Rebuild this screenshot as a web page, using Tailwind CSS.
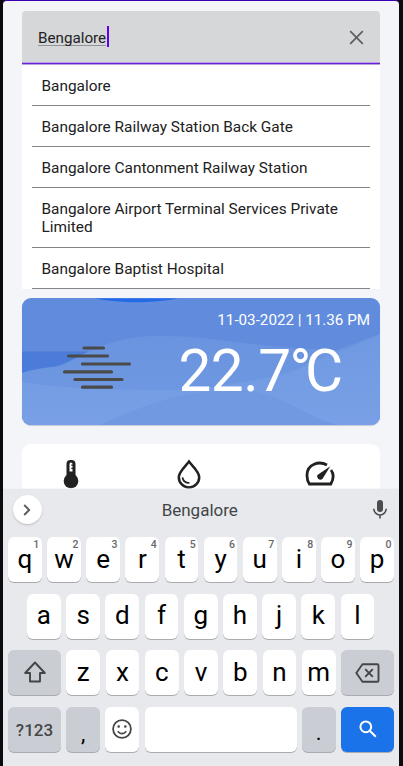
<!DOCTYPE html>
<html lang="en">
<head>
<meta charset="utf-8">
<title>Weather search</title>
<script src="https://cdn.jsdelivr.net/npm/@tailwindcss/browser@4"></script>
</head>
<body class="w-[403px] h-[766px] overflow-hidden bg-[#0b0a0c] font-['Roboto',sans-serif]">
<div class="ml-[3px] w-[396px] h-[766px] flex flex-col overflow-hidden rounded-t-[4px] bg-[#f4f5f8] border-t border-[#3700b3]">

  <main class="h-[488px] shrink-0 overflow-hidden pt-[10px] pl-[19px] pr-[19px]">
    <div class="h-[51px] flex items-center justify-between rounded-t-[4px] bg-[#d6d7d9] pl-[16px] pr-[16px]">
      <div class="flex items-center">
        <span class="text-[15.2px] leading-[18px] text-[#222] border-b border-[#929395] h-[17px] mt-[1px] w-[68px] whitespace-nowrap">Bengalore</span>
        <span class="w-[2px] h-[21px] ml-[1px] bg-[#6200ee]"></span>
      </div>
      <svg class="w-[15px] h-[15px] mt-[2px]" viewBox="0 0 15 15" fill="none" stroke="#5f6062" stroke-width="1.8"><path d="M1.200 1.200 13.800 13.800M13.800 1.200 1.200 13.800"/></svg>
    </div>
    <div class="h-[3px] bg-[#6a1fd8] border-y border-[#b6a2e2]"></div>
    <div class="h-[224px] bg-white px-[10px] text-[15.4px] leading-[18px] text-[#212121] [&>div]:border-b [&>div]:border-[#858585] [&>div]:pl-[9.5px] [&>div]:pt-px [&>div]:flex [&>div]:items-center">
      <div class="h-[41px]">Bangalore</div>
      <div class="h-[41px]">Bangalore Railway Station Back Gate</div>
      <div class="h-[41px]">Bangalore Cantonment Railway Station</div>
      <div class="h-[60px]">Bangalore Airport Terminal Services Private Limited</div>
      <div class="h-[41px]">Bangalore Baptist Hospital</div>
    </div>

    <section class="relative mt-[9px] h-[127px] overflow-hidden rounded-[9px] bg-[#618cdd] shadow-[0_1px_1px_#c5cad4]">
      <svg class="absolute inset-0 w-[358px] h-[127px]" viewBox="0 0 358 127">
        <defs>
          <linearGradient id="hill" x1="0" y1="0" x2="0" y2="1"><stop offset="0" stop-color="#6a94df"/><stop offset="1" stop-color="#7199e2"/></linearGradient>
          <linearGradient id="front" x1="0" y1="0" x2="0" y2="1"><stop offset="0" stop-color="#6f99e2"/><stop offset="1" stop-color="#79a0e6"/></linearGradient>
        </defs>
        <path d="M73 0.500H156Q114 8 73 0.500Z" fill="#2469e8"/>
        <path d="M0 53.500H80L40 75H0Z" fill="#4b7cd9"/>
        <path d="M0 75C18 69 28 70 36 68C56 62 82 38 136 38C190 37 225 50 315 52L358 36V127H0Z" fill="url(#hill)"/>
        <path d="M0 84C45 91 85 92 150 92C190 92 215 84 245 80C280 74 298 58 325 51L358 36V127H0Z" fill="url(#front)"/>
        <path d="M78 127C120 108 160 92 215 92C258 92 280 118 316 127Z" fill="#7099e1"/>
        <g stroke="#4a4a4b" stroke-width="3.2" stroke-linecap="round">
          <path d="M62 50H81.500M46.500 58H85.500M60.500 66H107.500M42.500 73.800H89.500M53 81.500H100M60.500 89.200H89.500"/>
        </g>
      </svg>
      <div class="relative text-right text-white">
        <div class="pt-[13px] pr-[10px] text-[15.2px] leading-[19px]">11-03-2022 | 11.36 PM</div>
        <div class="pr-[37px] mt-[8px] text-[58.500px] leading-[66px] whitespace-nowrap"><span class="tracking-[-0.5px]">22.</span><span class="tracking-[-1.500px]">7</span><span class="tracking-[-6.500px]">°</span><span>C</span></div>
      </div>
    </section>

    <section class="mt-[19px] h-[60px] rounded-t-[9px] bg-white grid grid-cols-[97px_140px_122px] justify-items-center">
      <svg class="w-[16px] h-[30px] mt-[15px]" viewBox="0 0 16 30"><rect x="3.500" y="1" width="9" height="22" rx="4" fill="#212121"/><circle cx="8" cy="22" r="7.300" fill="#212121"/><path d="M6.500 5a1.500 1.500 0 0 1 3 0v7.500H6.500Z" fill="#fff"/><path d="M8.300 6.200H10.200M8.300 9.400H10.200" stroke="#212121" stroke-width="1.200"/></svg>
      <svg class="w-[24px] h-[30px] mt-[15px]" viewBox="0 0 24 30" fill="none" stroke="#212121"><path d="M12 2.600C9 6.700 1.800 12.500 1.800 18.200a10.200 10.200 0 0 0 20.400 0C22.200 12.500 15 6.700 12 2.600Z" stroke-width="2.500"/><path d="M5.500 18.300c.3 3.300 3 5.600 7 5.700" stroke-width="1.700"/></svg>
      <svg class="w-[30px] h-[26px] mt-[17px]" viewBox="0 0 30 26" fill="none" stroke="#212121" stroke-width="2.800"><path d="M22 4C14 -0.500 2.200 3 2 14Q1.900 19.200 4.400 23H25.800C28.600 18 28.700 12.500 26 9"/><path d="m25.300 5.200-7.900 12.800a3.300 3.300 0 0 1-5-4Z" fill="#212121" stroke="none"/></svg>
    </section>
  </main>

  <section class="flex-1 bg-[#e8e9ed] px-[5px] shadow-[0_-1px_1px_#ececef66] z-10">
    <div class="h-[48px] grid grid-cols-[1fr_auto_1fr] items-center pl-[4.500px] pr-[7px] pb-[7px]">
      <div class="w-[29px] h-[29px] rounded-full bg-white shadow-[0_1px_2px_#bbb] flex items-center justify-center">
        <svg class="w-[8px] h-[12px]" viewBox="0 0 8 12" fill="none" stroke="#5a5b5d" stroke-width="1.900"><path d="m1.200 1 5 5-5 5"/></svg>
      </div>
      <div class="text-[17px] text-[#444547] pt-[3px]">Bengalore</div>
      <svg class="w-[14px] h-[19px] justify-self-end" viewBox="0 0 14 19"><rect x="4" y="0" width="6" height="12" rx="3" fill="#4b4c4e"/><path d="M.8 8.800a6.200 6.200 0 0 0 12.400 0M7 15v3.500" fill="none" stroke="#4b4c4e" stroke-width="1.600"/></svg>
    </div>

    <div class="flex flex-col gap-[11.700px] text-black text-[26px] leading-none [&_b]:absolute [&_b]:right-[2.500px] [&_b]:top-[2px] [&_b]:text-[10.500px] [&_b]:leading-[11px] [&_b]:font-medium [&_b]:text-[#666769] [&>div]:flex [&>div]:gap-[5.400px] [&>div]:h-[45px] [&>div>div]:relative [&>div>div]:h-[45px] [&>div>div]:rounded-[6px] [&>div>div]:shadow-[0_1px_0_#a9abaf] [&>div>div]:flex [&>div>div]:items-center [&>div>div]:justify-center [&>div>div]:pb-[2px]">
      <div class="[&>div]:flex-1 [&>div]:bg-white">
        <div>q<b>1</b></div><div>w<b>2</b></div><div>e<b>3</b></div><div>r<b>4</b></div><div>t<b>5</b></div><div>y<b>6</b></div><div>u<b>7</b></div><div>i<b>8</b></div><div>o<b>9</b></div><div>p<b>0</b></div>
      </div>
      <div class="pl-[19px] pr-[19.500px] [&>div]:flex-1 [&>div]:bg-white">
        <div>a</div><div>s</div><div>d</div><div>f</div><div>g</div><div>h</div><div>j</div><div>k</div><div>l</div>
      </div>
      <div>
        <div class="w-[53px] bg-[#cbcdd5]"><svg class="w-[22px] h-[22px]" viewBox="0 0 22 22" fill="none" stroke="#444547" stroke-width="1.900" stroke-linejoin="round"><path d="M11 1.500 1.200 12H6v8.500h10V12h4.800Z"/></svg></div>
        <div class="flex-1 bg-white">z</div><div class="flex-1 bg-white">x</div><div class="flex-1 bg-white">c</div><div class="flex-1 bg-white">v</div><div class="flex-1 bg-white">b</div><div class="flex-1 bg-white">n</div><div class="flex-1 bg-white">m</div>
        <div class="w-[53px] bg-[#cbcdd5]"><svg class="w-[25px] h-[20px] mt-[2px]" viewBox="0 0 25 20" fill="none" stroke="#444547" stroke-width="1.900" stroke-linejoin="round"><path d="M7.500 1.200H22.200a1.300 1.300 0 0 1 1.300 1.300v15a1.300 1.300 0 0 1-1.300 1.300H7.500L1.300 10Z"/><path d="m10.200 6.200 7.600 7.600M17.800 6.200l-7.600 7.600"/></svg></div>
      </div>
      <div>
        <div class="w-[53px] bg-[#cbcdd5] text-[17px] font-medium text-[#444547]"><span class="pt-[3px]">?123</span></div>
        <div class="w-[33.700px] bg-[#cbcdd5]"><span class="text-[22px] pt-[11px]">,</span></div>
        <div class="w-[33.700px] bg-white"><svg class="w-[20px] h-[20px]" viewBox="0 0 20 20" fill="none" stroke="#444547" stroke-width="1.800"><circle cx="10" cy="10" r="8.900"/><path d="M5.700 12.200q4.300 5 8.600 0" stroke-width="1.700"/><circle cx="6.700" cy="7.500" r="1.300" fill="#444547" stroke="none"/><circle cx="13.300" cy="7.500" r="1.300" fill="#444547" stroke="none"/></svg></div>
        <div class="flex-1 bg-white"></div>
        <div class="w-[33.700px] bg-[#cbcdd5]"><span class="text-[22px] pt-[9px]">.</span></div>
        <div class="w-[53px] bg-[#1a73e8]"><svg class="w-[18px] h-[18px]" viewBox="0 0 18 18" fill="none" stroke="#fff" stroke-width="2"><circle cx="6.800" cy="6.800" r="5.400"/><path d="m10.800 10.800 6 6"/></svg></div>
      </div>
    </div>
  </section>
</div>
</body>
</html>
